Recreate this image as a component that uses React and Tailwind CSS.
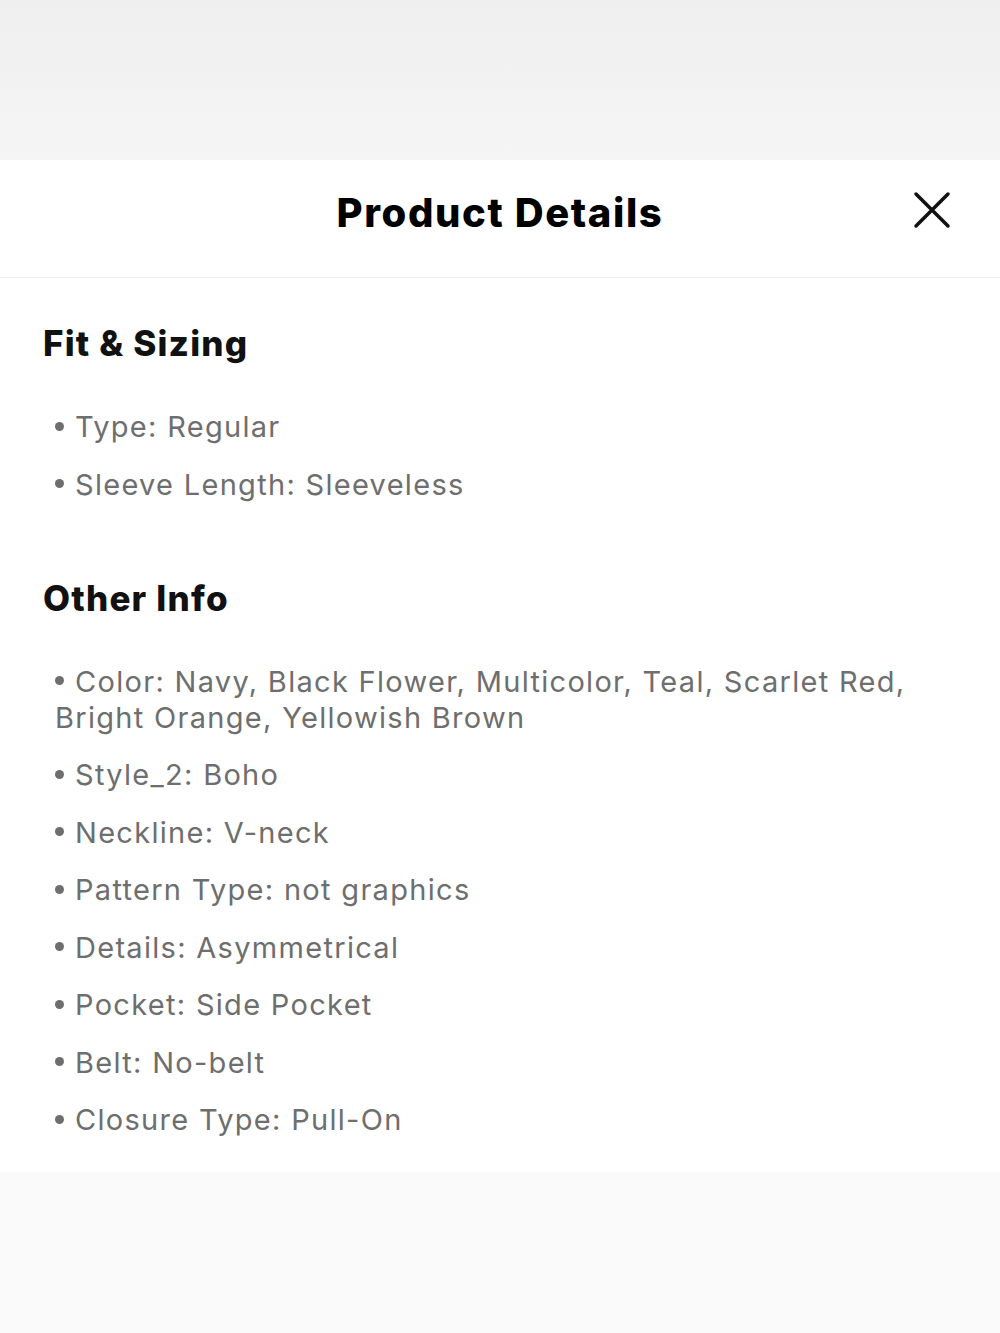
import React from 'react';

const fitSizing = ['Type: Regular', 'Sleeve Length: Sleeveless'];

const otherInfo = [
  'Color: Navy, Black Flower, Multicolor, Teal, Scarlet Red, Bright Orange, Yellowish Brown',
  'Style_2: Boho',
  'Neckline: V-neck',
  'Pattern Type: not graphics',
  'Details: Asymmetrical',
  'Pocket: Side Pocket',
  'Belt: No-belt',
  'Closure Type: Pull-On',
];

function Section({ title, items }) {
  return (
    <section>
      <h2 className="text-[35px] leading-[40px] font-extrabold text-[#111] tracking-[1.2px]">{title}</h2>
      <ul className="mt-[46px] pl-[12px] flex flex-col gap-[21.5px]">
        {items.map((item) => (
          <li key={item} className="text-[29px] leading-[36px] text-[#6e6e6e] tracking-[1.3px]">
            <span className="inline-block w-[9px] h-[9px] rounded-full bg-[#6e6e6e] mr-[11px] mb-[6px] align-middle"></span>
            {item}
          </li>
        ))}
      </ul>
    </section>
  );
}

export default function App() {
  return (
    <div className="w-[1000px] h-[1333px] flex flex-col bg-[#fbfbfb] font-['Inter',sans-serif]">
      {/* dimmed page behind the sheet */}
      <div className="h-[160px] bg-gradient-to-b from-[#efefef] to-[#f5f5f5]"></div>

      <div className="bg-white">
        {/* header */}
        <header className="h-[118px] grid grid-cols-[1fr_auto_1fr] items-center border-b border-[#eeeeee]">
          <div></div>
          <h1 className="text-[40px] font-extrabold text-black tracking-[1.6px] mb-[12px]">Product Details</h1>
          <div className="flex justify-end pr-[49px] mb-[17px]">
            <svg width="38" height="38" viewBox="0 0 38 38" fill="none" stroke="#111" strokeWidth="3.5" strokeLinecap="round">
              <path d="M3 3 L35 35 M35 3 L3 35" />
            </svg>
          </div>
        </header>

        {/* body */}
        <div className="pl-[43px] pr-[43px] pt-[45px] pb-[34px] flex flex-col gap-[75px]">
          <Section title="Fit & Sizing" items={fitSizing} />
          <Section title="Other Info" items={otherInfo} />
        </div>
      </div>

      <div className="flex-1 bg-[#fafafa]"></div>
    </div>
  );
}
